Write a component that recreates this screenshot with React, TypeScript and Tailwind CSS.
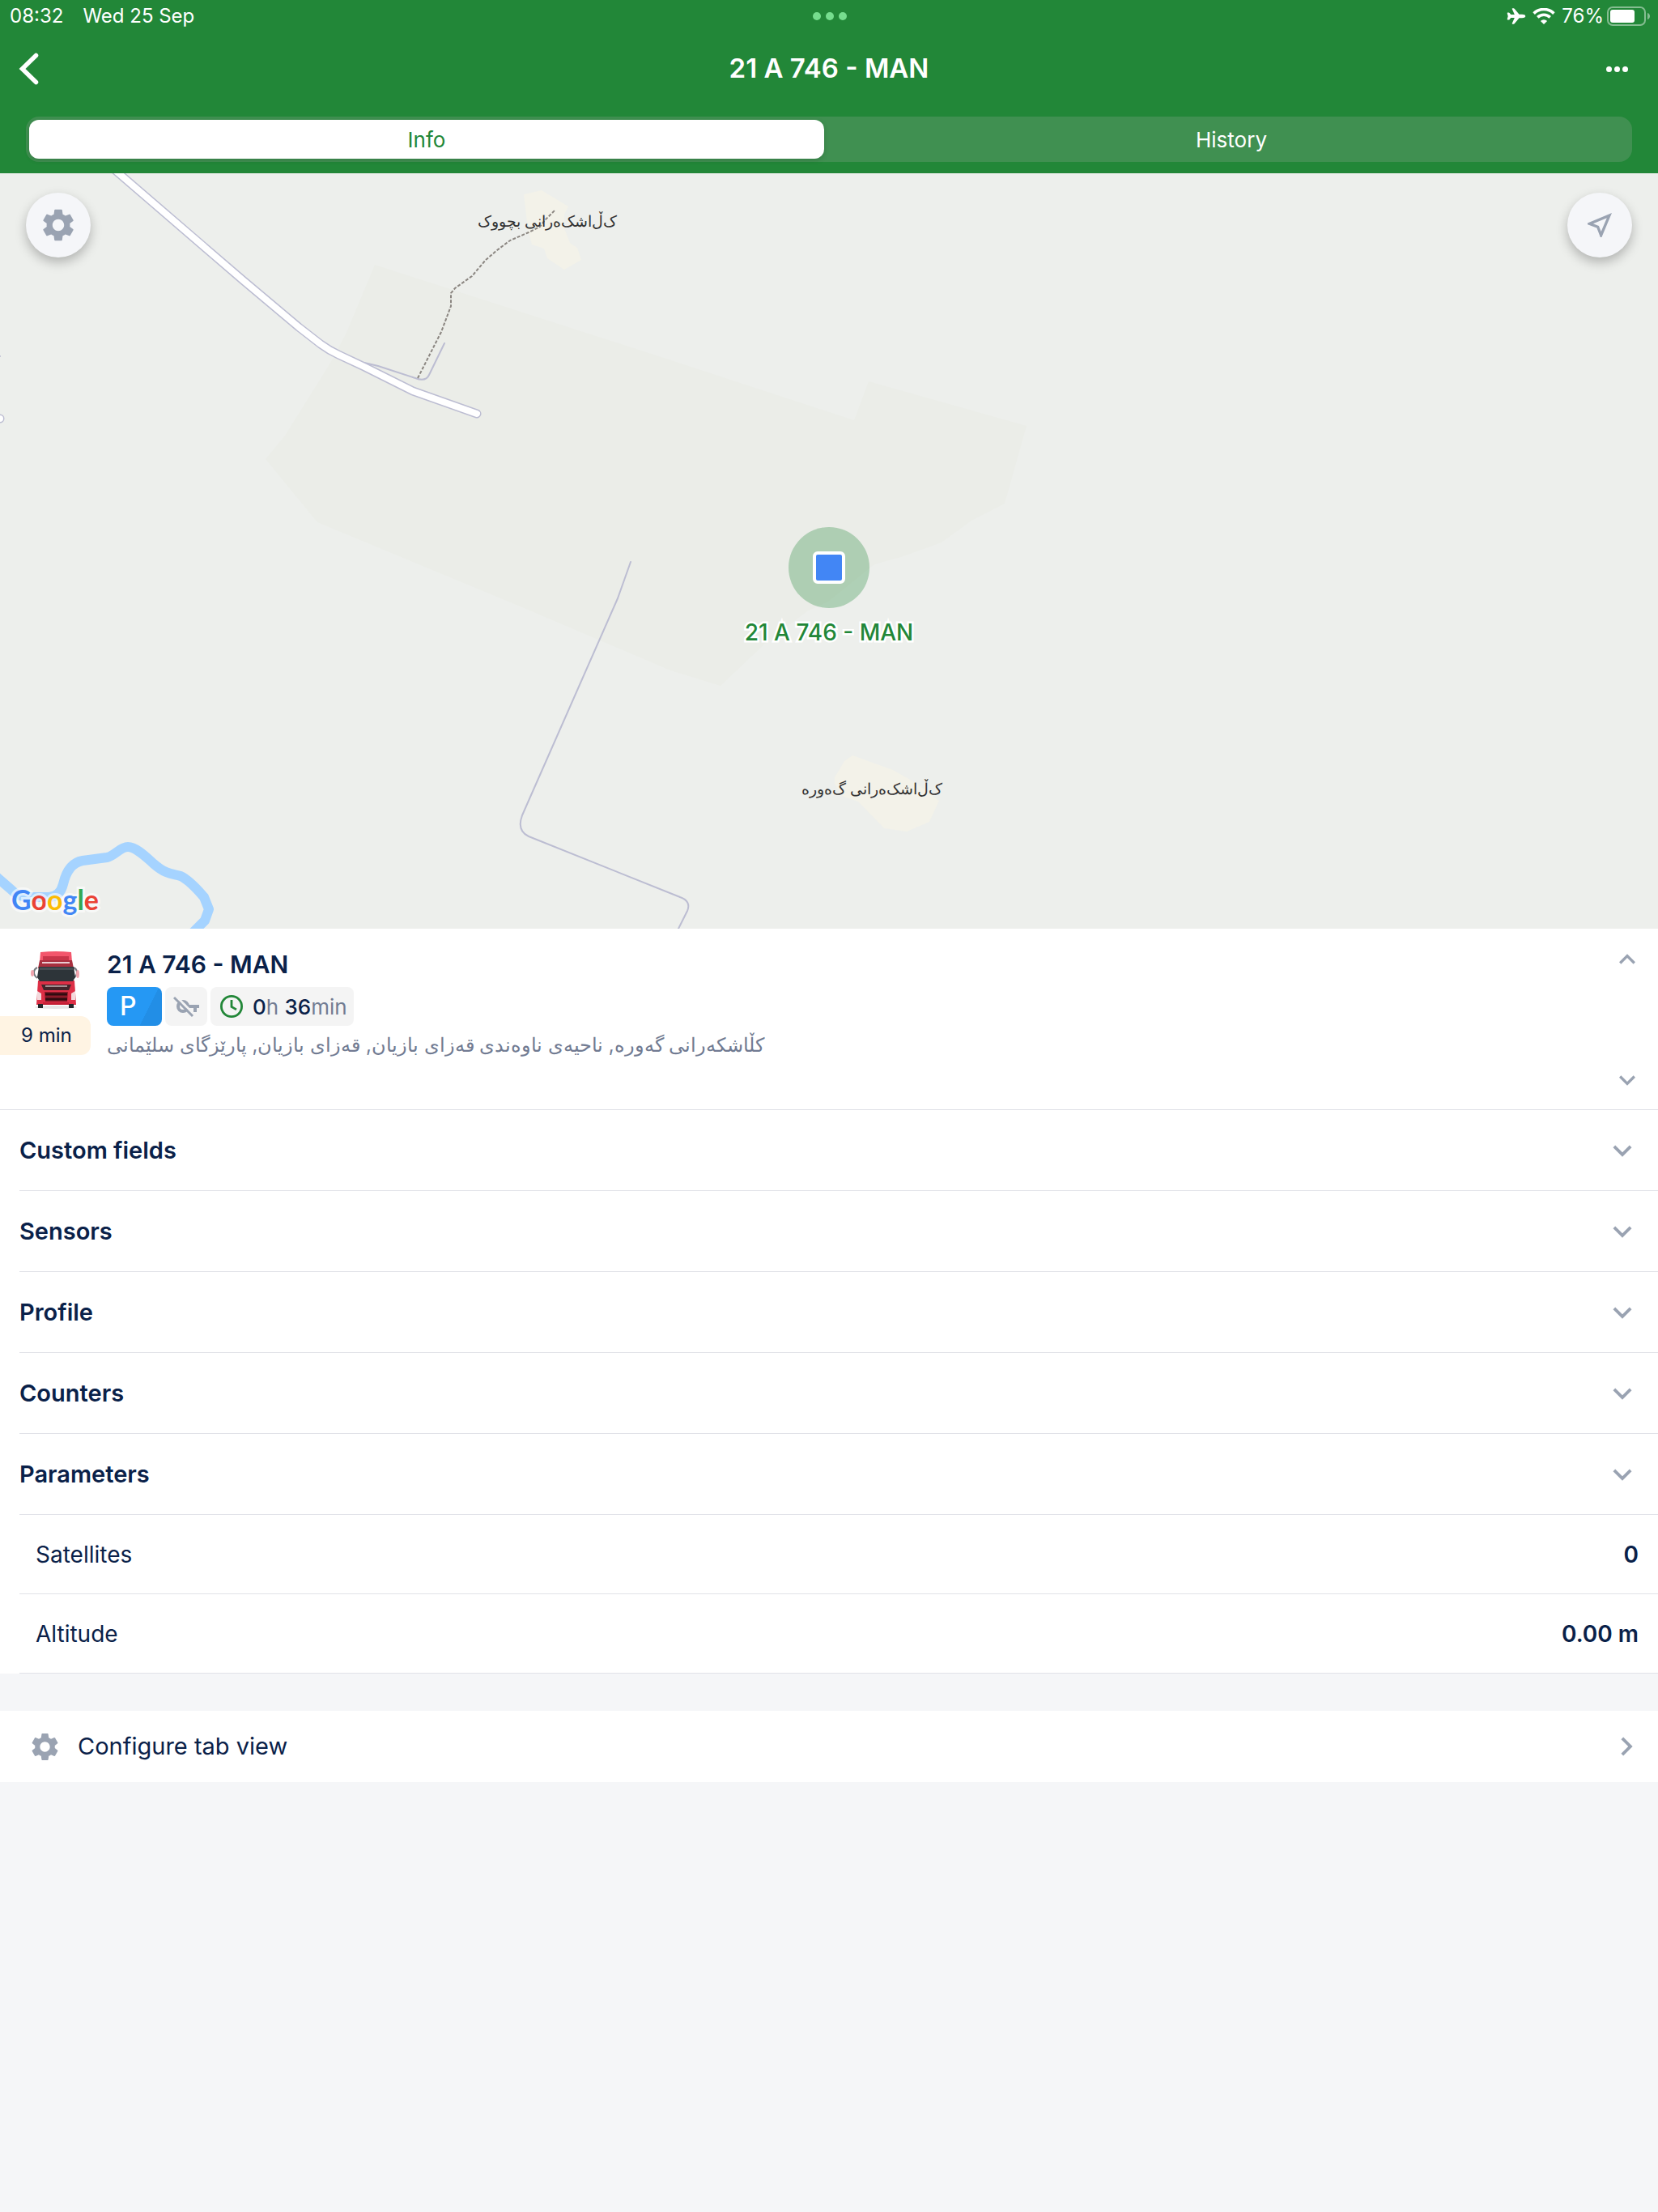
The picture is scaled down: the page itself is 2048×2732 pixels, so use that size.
import { useState } from 'react';
import {
  MdKeyboardArrowDown,
  MdKeyboardArrowRight,
  MdKeyboardArrowUp,
  MdOutlineNearMe,
  MdSettings,
} from 'react-icons/md';
import { IoAirplane } from 'react-icons/io5';

const UNIT_NAME = '21 A 746 - MAN';

const SECTIONS = ['Custom fields', 'Sensors', 'Profile', 'Counters', 'Parameters'];

const PARAMETERS = [
  { label: 'Satellites', value: '0' },
  { label: 'Altitude', value: '0.00 m' },
];

const TABS = ['Info', 'History'];

function WifiIcon() {
  return (
    <svg width="28" height="20" viewBox="0 0 28 20" fill="none" aria-hidden="true">
      <path d="M1.6 6.6a17.6 17.6 0 0 1 24.8 0" stroke="white" strokeWidth="3.6" />
      <path d="M6.3 11.4a11 11 0 0 1 15.4 0" stroke="white" strokeWidth="3.6" />
      <path d="M9.9 15.9a5.8 5.8 0 0 1 8.2 0L14 20z" fill="white" />
    </svg>
  );
}

function BatteryIcon() {
  return (
    <svg width="54" height="24" viewBox="0 0 54 24" fill="none" aria-hidden="true">
      <rect x="1" y="1" width="46" height="22" rx="6" stroke="white" strokeOpacity="0.45" strokeWidth="2" />
      <rect x="4" y="4" width="30" height="16" rx="3" fill="white" />
      <path d="M50 8c4 1 4 7 0 8z" fill="white" fillOpacity="0.45" />
    </svg>
  );
}

function KeyOffIcon() {
  return (
    <svg width="32" height="28" viewBox="0 0 32 28" fill="none" aria-hidden="true">
      <circle cx="12" cy="14" r="6" stroke="#9aa3b2" strokeWidth="4" />
      <path d="M17 14h15M27 14v7" stroke="#9aa3b2" strokeWidth="4" />
      <path d="M3 1l24 24" stroke="#f4f4f4" strokeWidth="3" />
      <path d="M1 3l23 23" stroke="#9aa3b2" strokeWidth="3" />
    </svg>
  );
}

function ClockIcon() {
  return (
    <svg width="28" height="28" viewBox="0 0 28 28" fill="none" aria-hidden="true">
      <circle cx="14" cy="14" r="12.6" stroke="#228738" strokeWidth="2.8" />
      <path d="M14 6v8.5l6 3.4" stroke="#228738" strokeWidth="2.8" />
    </svg>
  );
}

function Truck() {
  return (
    <svg width="64" height="76" viewBox="0 0 64 76" aria-hidden="true">
      <ellipse cx="33" cy="73" rx="26" ry="2" fill="#e6e6e6" />
      <path d="M14 5q19-2 38 0l1 12H13z" fill="#f3566c" />
      <path d="M17 10h32v5H17z" fill="#c9354a" />
      <path d="M13 15h40l2 10H11z" fill="#a8303f" />
      <path d="M16 17h34v2H16z" fill="#e9ccd2" />
      <path d="M10 24q-4 2-4 6t4 7M55 24q4 2 4 6t-4 7" fill="none" stroke="#77797e" strokeWidth="2" />
      <ellipse cx="4" cy="31" rx="2" ry="4" fill="#f0a5ae" />
      <ellipse cx="60" cy="32" rx="2" ry="5" fill="#f0a5ae" />
      <path d="M11 40h45l2 30H9z" fill="#dd2f46" />
      <path d="M12 23h43l2 13-3 5H13l-3-5z" fill="#2d3439" />
      <path d="M13 24h41v3H13z" fill="#464d53" />
      <path d="M15 45h37l-3 7H18z" fill="#43252b" />
      <path d="M20 46h27v2H20z" fill="#a58f93" />
      <path d="M19 54h29l-1 12H20z" fill="#8a1a28" />
      <path d="M20 57h27M20 63h27" stroke="#2f0b10" strokeWidth="3" />
      <path d="M10 53l5 3v8h-5zM57 53l-5 3v8h5z" fill="#f3d9dc" />
      <path d="M17 67h32v3H17z" fill="#c51f35" />
      <path d="M11 69h6v5h-6zM49 69h6v5h-6z" fill="#23262a" />
    </svg>
  );
}

function MapDrawing() {
  return (
    <svg className="block h-auto w-full" viewBox="0 214 2048 933" fill="none" aria-hidden="true">
      <rect y="214" width="2048" height="933" fill="#edefec" />
      <path
        d="M463 327L820 442L1055 519L1073 471L1268 526L1241 622L1200 643L1163 670L1113 688L1080 697L1023 743L997 755L947 793L890 847L828 828L645 750L392 645L328 567L352 538L407 450L427 413Z"
        fill="#ebede8"
      />
      <path
        d="M647 240L669 235L702 255L697 265V282L704 300L713 306L718 321L697 333L676 319L672 307L657 302L652 283Z"
        fill="#f3f2e9"
      />
      <path
        d="M1053 933L1103 951L1133 968L1160 989L1148 1015L1120 1027L1092 1023L1067 997L1060 990L1040 983L1031 968V960L1043 940Z"
        fill="#f3f2e9"
      />
      <path
        d="M-10 1078L13 1098Q22 1108 36 1108H60Q74 1108 78 1092Q84 1066 102 1063L132 1059C142 1057 148 1046 158 1046C168 1046 180 1058 190 1067C206 1081 214 1079 223 1082C232 1086 246 1101 252 1108L258 1123L253 1137L236 1154"
        stroke="#a5d3ff"
        strokeWidth="12"
        strokeLinejoin="round"
      />
      <g stroke="#bcbdd2" strokeWidth="2" strokeLinecap="round" strokeLinejoin="round">
        <path d="M450 448L467 452L513 467Q526 472 530 463L549 424" />
        <path d="M779 694L763 739L645 1007Q638 1026 653 1033L840 1108Q854 1113 849 1125L837 1149" />
        <path d="M-2 440h2" />
      </g>
      <path
        d="M516 467L545 410L557 378V362L562 356L583 341L600 321L614 309L630 297L653 287L667 280L673 272L686 259"
        stroke="#8b8681"
        strokeWidth="2"
        strokeDasharray="4 2"
      />
      <g strokeLinecap="round" strokeLinejoin="round">
        <path d="M135 204L300 346L369 404L396 425Q407 433 418 438L450 453L510 483L589 511" stroke="#bcbdd2" strokeWidth="11" />
        <path d="M135 204L300 346L369 404L396 425Q407 433 418 438L450 453L510 483L589 511" stroke="white" strokeWidth="8" />
        <path d="M-8 517H0" stroke="#bcbdd2" strokeWidth="11" />
        <path d="M-8 517H0" stroke="white" strokeWidth="8" />
      </g>
    </svg>
  );
}

function MapView() {
  return (
    <section className="relative overflow-hidden" aria-label="Map">
      <MapDrawing />

      <span
        dir="rtl"
        className="absolute left-[33%] top-[6.4%] -translate-x-1/2 -translate-y-1/2 whitespace-nowrap text-[19px] text-[#333]"
      >
        ک‌ڵ‌اشک‌ەرانی بچووک
      </span>
      <span
        dir="rtl"
        className="absolute left-[52.6%] top-[81.6%] -translate-x-1/2 -translate-y-1/2 whitespace-nowrap text-[19px] text-[#333]"
      >
        ک‌ڵ‌اشک‌ەرانی گ‌ەورە
      </span>

      <div className="absolute left-1/2 top-[52.2%] flex size-[100px] -translate-x-1/2 -translate-y-1/2 items-center justify-center rounded-full bg-[#228738]/30">
        <div className="size-10 rounded-md border-4 border-white bg-[#4286f5]" />
      </div>
      <span className="absolute left-1/2 top-[60.8%] -translate-x-1/2 -translate-y-1/2 whitespace-nowrap text-[28px] font-medium text-[#228738] [-webkit-text-stroke:5px_white] [paint-order:stroke_fill]">
        {UNIT_NAME}
      </span>

      <button
        aria-label="Map settings"
        className="absolute left-8 top-6 flex size-20 items-center justify-center rounded-full bg-[#f5f6f9] text-[#9aa3b2] shadow-[0_6px_14px_rgba(0,0,0,0.25)]"
      >
        <MdSettings size={48} />
      </button>
      <button
        aria-label="Follow unit"
        className="absolute right-8 top-6 flex size-20 items-center justify-center rounded-full bg-[#f5f6f9] text-[#9aa3b2] shadow-[0_6px_14px_rgba(0,0,0,0.25)]"
      >
        <MdOutlineNearMe size={40} />
      </button>

      <span className="absolute bottom-3 left-3.5 font-['Lato',sans-serif] text-[34px] font-bold leading-[48px] [-webkit-text-stroke:6px_rgba(255,255,255,0.6)] [paint-order:stroke_fill]">
        <span className="text-[#4286f5]">G</span>
        <span className="text-[#ea4335]">o</span>
        <span className="text-[#fbbc05]">o</span>
        <span className="text-[#4286f5]">g</span>
        <span className="text-[#34a853]">l</span>
        <span className="text-[#ea4335]">e</span>
      </span>
    </section>
  );
}

function UnitCard() {
  return (
    <section className="flex border-b border-[#e1e2e8] bg-white">
      <div className="flex w-28 flex-col pt-6">
        <div className="pl-9">
          <Truck />
        </div>
        <div className="mt-2 flex h-12 items-center rounded-r-xl bg-[#fff4e3] pl-[26px] text-[24px]">9 min</div>
      </div>

      <div className="ml-5 flex flex-1 flex-col items-start pb-[59px] pt-6">
        <h2 className="text-[30px] font-semibold leading-10">{UNIT_NAME}</h2>
        <div className="mt-2 flex gap-1">
          <span className="flex h-12 w-[68px] items-center rounded-lg bg-[linear-gradient(117deg,#2598f4_70%,#228ee6_70%)] pl-4 text-[32px] font-medium text-white">
            P
          </span>
          <span className="flex h-12 items-center rounded-lg bg-[#f4f4f4] px-[10px]">
            <KeyOffIcon />
          </span>
          <span className="flex h-12 items-center gap-3 rounded-lg bg-[#f4f4f4] pl-3 pr-2 text-[26px]">
            <ClockIcon />
            <span className="text-[#717b92]">
              <b className="font-medium text-[#0a2149]">0</b>h <b className="font-medium text-[#0a2149]">36</b>min
            </span>
          </span>
        </div>
        <p dir="rtl" className="mt-1 text-[24px] leading-10 text-[#717b92]">
          کڵاشکەرانی گەورە, ناحیەی ناوەندی قەزای بازیان, قەزای بازیان, پارێزگای سلێمانی
        </p>
      </div>

      <div className="flex flex-col justify-between pb-4 pr-[18px] pt-[18px] text-[#9aa3b2]">
        <button aria-label="Previous unit">
          <MdKeyboardArrowUp size={40} />
        </button>
        <button aria-label="Next unit">
          <MdKeyboardArrowDown size={40} />
        </button>
      </div>
    </section>
  );
}

export default function App() {
  const [tab, setTab] = useState('Info');

  return (
    <div className="min-h-screen bg-[#f5f6f8] font-['Inter','Noto_Sans',sans-serif] text-[#0a2149]">
      <header className="bg-[#228738] px-8 pb-[14px] text-white">
        <div className="-mx-8 grid h-10 grid-cols-3 items-center pl-3 pr-[9px] text-[24px]">
          <div className="flex gap-6">
            <span>08:32</span>
            <span>Wed 25 Sep</span>
          </div>
          <div className="flex justify-center gap-[6px]">
            <span className="size-[10px] rounded-full bg-[#76dd8e]" />
            <span className="size-[10px] rounded-full bg-[#76dd8e]" />
            <span className="size-[10px] rounded-full bg-[#76dd8e]" />
          </div>
          <div className="flex items-center justify-end">
            <IoAirplane size={24} className="mr-2" />
            <WifiIcon />
            <span className="ml-2 mr-1">76%</span>
            <BatteryIcon />
          </div>
        </div>

        <div className="-mx-8 flex h-[104px] items-center justify-between pb-[14px] pl-5 pr-[37px]">
          <button aria-label="Back" className="w-11">
            <svg width="32" height="44" viewBox="0 0 32 44" fill="none" aria-hidden="true">
              <path d="M24.5 5.5L7.5 22l17 16.5" stroke="white" strokeWidth="5.5" strokeLinecap="round" />
            </svg>
          </button>
          <h1 className="text-[33px] font-semibold">{UNIT_NAME}</h1>
          <button aria-label="More" className="flex w-[27px] gap-[3px]">
            <span className="size-[7px] rounded-full bg-white" />
            <span className="size-[7px] rounded-full bg-white" />
            <span className="size-[7px] rounded-full bg-white" />
          </button>
        </div>

        <div className="grid h-14 grid-cols-2 gap-3 rounded-2xl bg-[#409051] p-1 text-[26px]">
          {TABS.map((name) => (
            <button
              key={name}
              onClick={() => setTab(name)}
              className={
                tab === name
                  ? 'rounded-xl bg-white text-[#228738] shadow-[0_2px_6px_rgba(0,0,0,0.15)]'
                  : 'rounded-xl'
              }
            >
              {name}
            </button>
          ))}
        </div>
      </header>

      <main>
        <MapView />
        <UnitCard />

        <div className="bg-white pl-6">
          {SECTIONS.map((section) => (
            <button
              key={section}
              className="flex h-25 w-full items-center justify-between border-b border-[#e1e2e8] pr-[21px] text-[29px] font-semibold"
            >
              {section}
              <MdKeyboardArrowDown size={46} className="text-[#9aa3b2]" />
            </button>
          ))}
          <dl>
            {PARAMETERS.map(({ label, value }) => (
              <div
                key={label}
                className="flex h-[98px] items-center justify-between border-b border-[#e1e2e8] pl-5 pr-6 text-[28px]"
              >
                <dt>{label}</dt>
                <dd className="font-semibold">{value}</dd>
              </div>
            ))}
          </dl>
        </div>

        <button className="mt-[46px] flex h-22 w-full items-center bg-white pl-[35px] pr-4 text-[29px]">
          <MdSettings size={41} className="text-[#9aa3b2]" />
          <span className="ml-5 flex-1 text-left">Configure tab view</span>
          <MdKeyboardArrowRight size={46} className="text-[#9aa3b2]" />
        </button>
      </main>
    </div>
  );
}
